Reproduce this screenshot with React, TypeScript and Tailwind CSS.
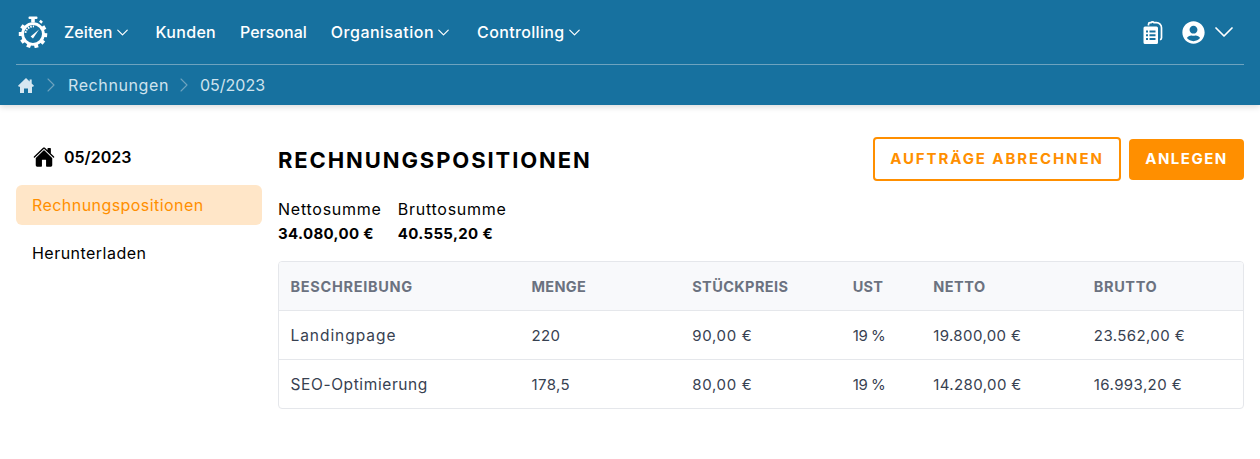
import React from "react";
import { ChevronDown, ChevronRight } from "lucide-react";
import { IoHome } from "react-icons/io5";
import { FaUserCircle } from "react-icons/fa";

const teeth = [60, 95, 130, 165, 200, 235, 270, 305];

const Logo = () => (
  <svg width="30" height="32" viewBox="0 0 30 32" fill="none">
    <rect x="10.5" y="0.5" width="9" height="2.6" rx="1" fill="#fff" />
    <rect x="13.2" y="3" width="3.6" height="3.5" fill="#fff" />
    <rect x="21.5" y="4.500" width="3" height="2.500" transform="rotate(40 23 5.700)" fill="#fff" />
    {teeth.map((a) => (
      <rect key={a} x="13" y="3.800" width="4" height="4" fill="#fff" transform={`rotate(${a} 15 18)`} />
    ))}
    <circle cx="15" cy="18" r="10.4" stroke="#fff" strokeWidth="2.800" />
    <path d="M7.500 16.800A7.600 7.600 0 0 1 16 10.500" stroke="#fff" strokeWidth="1.800" strokeDasharray="1.600 1" />
    <path d="M12.600 20.600l8.400-7.200-6 9z" fill="#fff" />
  </svg>
);

const Docs = () => (
  <svg width="20" height="23" viewBox="0 0 20 23" fill="none">
    <path d="M5.500 4.500V3.200A1.500 1.500 0 0 1 7 1.700h1A1.800 1.800 0 0 1 11 1.700h2.500a5 5 0 0 1 5 5V17a1.600 1.600 0 0 1-1.600 1.600" stroke="#fff" strokeWidth="1.700" />
    <path fillRule="evenodd" clipRule="evenodd" d="M0.500 7A1.500 1.500 0 0 1 2 5.500h11.500A1.500 1.500 0 0 1 15 7v14.500a1.500 1.500 0 0 1-1.500 1.500H2a1.500 1.500 0 0 1-1.500-1.500zM3 9.500v2h2v-2zM6.500 9.500v2h6v-2zM3 13.200v2h2v-2zM6.500 13.200v2h6v-2zM3 16.900v2h2v-2zM6.500 16.900v2h6v-2z" fill="#fff" />
  </svg>
);

const CrumbHome = () => (
  <svg width="16" height="15" viewBox="0 0 16 15" className="ml-[2px] text-[#d6e7f1]" fill="currentColor">
    <path d="M8 0l3.600 3.400V1.500h2.100v3.900L16 7.800l-.9.900H14V15h-4v-4.600H6V15H2V8.700H.9L0 7.800z" />
  </svg>
);

const NavItem = ({ label, chevron, track }: { label: string; chevron?: boolean; track: string }) => (
  <div className={`flex items-center text-white text-[16px] font-medium ${track}`}>
    <span>{label}</span>
    {chevron && <ChevronDown size={19} strokeWidth={1.5} />}
  </div>
);

const cols = [
  "col-span-3",
  "col-span-2",
  "col-span-2",
  "col-span-1",
  "col-span-2",
  "col-span-2",
];

const headTrack = [
  "tracking-[0.7px]",
  "tracking-[0.3px]",
  "tracking-[0.4px]",
  "tracking-[0.1px]",
  "tracking-[0.5px]",
  "tracking-[0.6px]",
];

const bodyClass = (i: number, nameTrack?: string) => {
  if (i === 0) return `text-[15.5px] ${nameTrack}`;
  if (i === 3) return "text-[15px] tracking-[-0.5px]";
  if (i === 2) return "text-[15px] tracking-[0.7px]";
  return "text-[15px] tracking-[0.4px]";
};

const Row = ({ cells, head, nameTrack }: { cells: string[]; head?: boolean; nameTrack?: string }) => (
  <div
    className={
      head
        ? "grid grid-cols-12 h-[48px] pt-[1px] items-center bg-[#f8f9fb] text-[#6b7280] font-bold text-[14.5px]"
        : "grid grid-cols-12 h-[49px] pt-[2px] items-center border-t border-[#e5e7eb] text-[#374151]"
    }
  >
    {cells.map((c, i) => (
      <div key={i} className={`${cols[i]} pl-[11.5px] ${head ? headTrack[i] : bodyClass(i, nameTrack)}`}>
        {c}
      </div>
    ))}
  </div>
);

export default function App() {
  return (
    <div className="h-[459px] bg-white overflow-hidden font-['Inter','Liberation_Sans',sans-serif]">
      <header className="bg-[#17719f] h-[105px] px-4 shadow-[0_2px_6px_rgba(0,0,0,0.15)]">
        <div className="h-[65px] flex items-center border-b border-[#6ea3bf]">
          <div className="ml-[2px] mr-[16px] flex items-center">
            <Logo />
          </div>
          <div className="flex items-center gap-[24px]">
            <NavItem label="Zeiten" chevron track="tracking-[0.1px]" />
            <NavItem label="Kunden" track="tracking-[0.3px]" />
            <NavItem label="Personal" track="tracking-[0px]" />
            <NavItem label="Organisation" chevron track="tracking-[0.5px]" />
            <NavItem label="Controlling" chevron track="tracking-[0.35px]" />
          </div>
          <div className="ml-auto mr-[4px] flex items-center text-white">
            <Docs />
            <FaUserCircle size={23} className="ml-[19px]" />
            <ChevronDown size={32} strokeWidth={1.3} className="ml-[3px]" />
          </div>
        </div>
        <div className="h-[40px] flex items-center text-[#cfe3ee] text-[16px]">
          <CrumbHome />
          <ChevronRight size={24} strokeWidth={1.1} className="ml-[5px] text-[#6ea3bf]" />
          <span className="ml-[5px] tracking-[0.6px]">Rechnungen</span>
          <ChevronRight size={24} strokeWidth={1.1} className="ml-[3px] text-[#6ea3bf]" />
          <span className="ml-[4px] tracking-[0px]">05/2023</span>
        </div>
      </header>
      <main className="flex px-4 pt-[32px]">
        <aside className="w-[246px] shrink-0 mr-4">
          <div className="flex items-center h-[40px] pl-[17px] text-black font-semibold text-[16px]">
            <IoHome size={22} />
            <span className="ml-[9px]">05/2023</span>
          </div>
          <div className="mt-[8px] h-[40px] rounded-md bg-[#ffe6c8] text-[#ff8f00] flex items-center px-4 text-[16px] tracking-[0.44px]">
            Rechnungspositionen
          </div>
          <div className="mt-[8px] h-[40px] text-black flex items-center px-4 text-[16px] tracking-[0.47px]">
            Herunterladen
          </div>
        </aside>
        <section className="flex-1 min-w-0">
          <div className="flex items-center h-[44px]">
            <h1 className="pt-[2px] text-[22px] font-bold text-black tracking-[1.9px]">RECHNUNGSPOSITIONEN</h1>
            <div className="ml-auto flex items-center gap-2">
              <button className="w-[248px] h-[44px] rounded border-2 border-[#ff8f00] text-[#ff8f00] text-[15px] font-bold tracking-[1.9px]">
                AUFTRÄGE ABRECHNEN
              </button>
              <button className="w-[115px] h-[41px] rounded bg-[#ff8f00] text-white text-[15px] font-bold tracking-[1.5px]">
                ANLEGEN
              </button>
            </div>
          </div>
          <div className="flex gap-4 mt-[16px] text-black text-[16px] tracking-[0.75px]">
            <div>
              <div className="leading-[25px]">Nettosumme</div>
              <div className="leading-[24px] font-bold text-[15px] tracking-[0.35px]">34.080,00 €</div>
            </div>
            <div>
              <div className="leading-[25px]">Bruttosumme</div>
              <div className="leading-[24px] font-bold text-[15px] tracking-[0.35px]">40.555,20 €</div>
            </div>
          </div>
          <div className="mt-[15px] border border-[#e5e7eb] rounded overflow-hidden">
            <Row head cells={["BESCHREIBUNG", "MENGE", "STÜCKPREIS", "UST", "NETTO", "BRUTTO"]} />
            <Row nameTrack="tracking-[0.95px]" cells={["Landingpage", "220", "90,00 €", "19 %", "19.800,00 €", "23.562,00 €"]} />
            <Row nameTrack="tracking-[0.6px]" cells={["SEO-Optimierung", "178,5", "80,00 €", "19 %", "14.280,00 €", "16.993,20 €"]} />
          </div>
        </section>
      </main>
    </div>
  );
}
